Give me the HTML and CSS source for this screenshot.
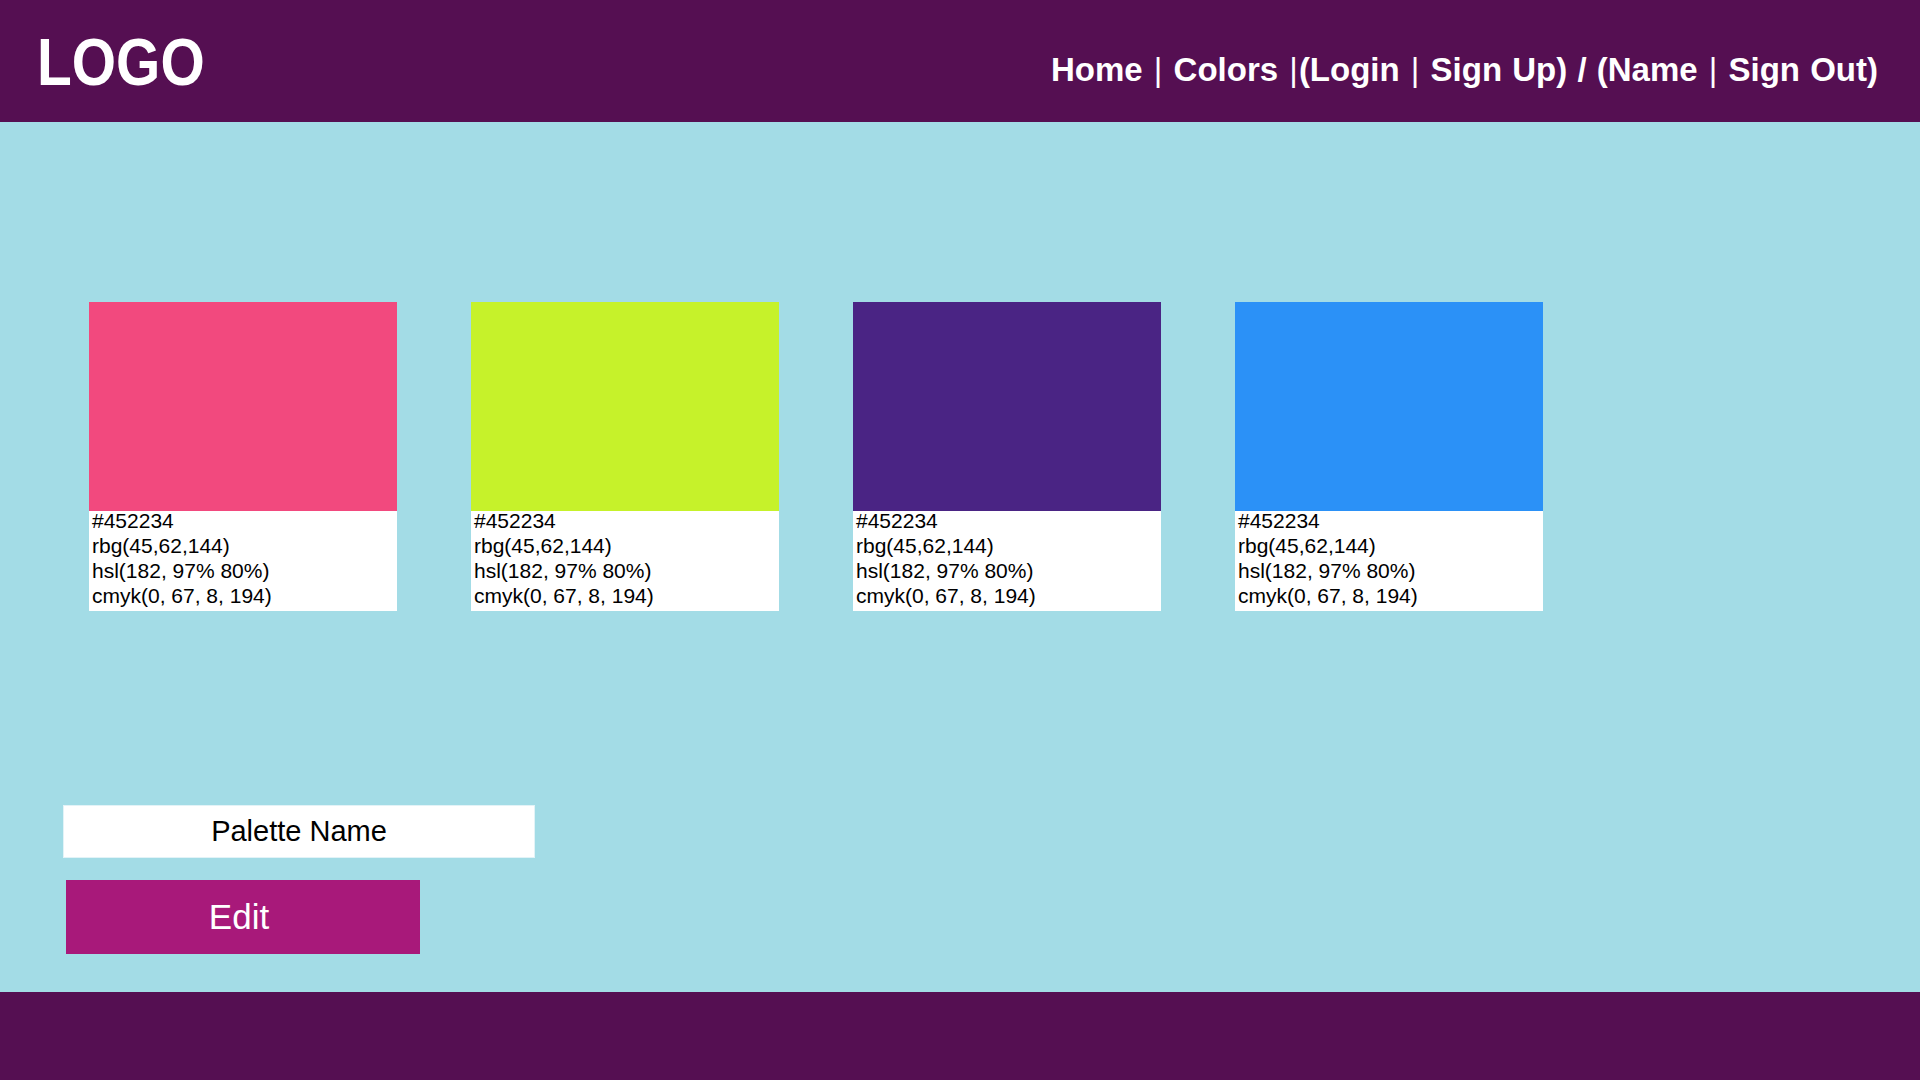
FILE: index.html
```html
<!DOCTYPE html>
<html lang="en">
<head>
<meta charset="utf-8">
<title>Palette</title>
<link rel="stylesheet" href="styles.css">
</head>
<body>
<div class="page">
  <header class="topbar">
    <div class="logo"><span class="logo-text">LOGO</span></div>
    <nav class="nav">Home <span class="bar">|</span> Colors <span class="bar">|</span>(Login <span class="bar">|</span> Sign Up) / (Name <span class="bar">|</span> Sign Out)</nav>
  </header>
  <main class="main">
    <section class="cards">
      <div class="card">
        <div class="swatch swatch-pink"></div>
        <div class="info">
          <div>#452234</div>
          <div>rbg(45,62,144)</div>
          <div>hsl(182, 97% 80%)</div>
          <div>cmyk(0, 67, 8, 194)</div>
        </div>
      </div>
      <div class="card">
        <div class="swatch swatch-lime"></div>
        <div class="info">
          <div>#452234</div>
          <div>rbg(45,62,144)</div>
          <div>hsl(182, 97% 80%)</div>
          <div>cmyk(0, 67, 8, 194)</div>
        </div>
      </div>
      <div class="card">
        <div class="swatch swatch-purple"></div>
        <div class="info">
          <div>#452234</div>
          <div>rbg(45,62,144)</div>
          <div>hsl(182, 97% 80%)</div>
          <div>cmyk(0, 67, 8, 194)</div>
        </div>
      </div>
      <div class="card">
        <div class="swatch swatch-blue"></div>
        <div class="info">
          <div>#452234</div>
          <div>rbg(45,62,144)</div>
          <div>hsl(182, 97% 80%)</div>
          <div>cmyk(0, 67, 8, 194)</div>
        </div>
      </div>
    </section>
    <section class="form">
      <div class="name-field">Palette Name</div>
      <button class="edit-btn" type="button">Edit</button>
    </section>
  </main>
  <footer class="footer"></footer>
</div>
</body>
</html>
```

FILE: styles.css
```css
* { box-sizing: border-box; }
html, body { margin: 0; padding: 0; }
body {
  font-family: "Liberation Sans", Arial, sans-serif;
  background: #a3dce6;
}
.page {
  display: flex;
  flex-direction: column;
  height: 1080px;
  width: 1920px;
  overflow: hidden;
}
.topbar {
  height: 122px;
  background: #550f52;
  display: flex;
  justify-content: space-between;
  align-items: flex-start;
  padding: 0 42px 0 37px;
  color: #fff;
}
.logo {
  padding-top: 23px;
  font-size: 67px;
  font-weight: 700;
  line-height: 77px;
  height: 77px;
}
.logo-text {
  display: inline-block;
  transform: scaleX(0.85);
  transform-origin: left center;
}
.nav {
  padding-top: 51px;
  font-size: 33px;
  font-weight: 700;
  line-height: 38px;
  word-spacing: 1px;
  white-space: pre;
}
.bar {
  font-weight: 400;
  padding: 0 1px;
}
.main {
  flex: 1;
  display: flex;
  flex-direction: column;
}
.cards {
  display: flex;
  gap: 74px;
  padding: 180px 0 0 89px;
}
.card {
  width: 308px;
  background: #fff;
}
.swatch { height: 209px; }
.swatch-pink { background: #f2497e; }
.swatch-lime { background: #c6f22a; }
.swatch-purple { background: #4a2484; }
.swatch-blue { background: #2b91f7; }
.info {
  height: 103px;
  margin-top: -3px;
  padding: 0 0 0 3px;
  font-size: 21px;
  line-height: 25px;
  color: #000;
  position: relative;
}
.form {
  display: flex;
  flex-direction: column;
  align-items: flex-start;
  padding: 194px 0 0 63px;
}
.name-field {
  width: 472px;
  height: 53px;
  background: #fff;
  border: 1px solid #e2f3f7;
  font-size: 29px;
  line-height: 51px;
  text-align: center;
  color: #000;
}
.edit-btn {
  margin: 22px 0 0 3px;
  width: 354px;
  height: 74px;
  background: #a8197a;
  border: 0;
  color: #fff;
  font-family: "Liberation Sans", Arial, sans-serif;
  font-size: 35px;
  line-height: 74px;
  padding: 0 8px 10px 0;
}
.footer {
  height: 88px;
  background: #550f52;
}
```
